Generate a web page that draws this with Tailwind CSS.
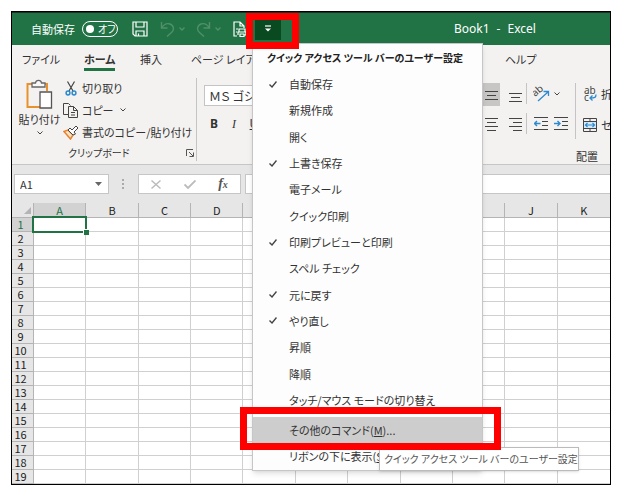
<!DOCTYPE html>
<html lang="ja">
<head>
  <meta charset="UTF-8" />
  <meta name="viewport" content="width=device-width, initial-scale=1.0" />
  <title>Book1 - Excel</title>
  <script src="https://cdn.jsdelivr.net/npm/@tailwindcss/browser@4"></script>
</head>
<body class="bg-white min-h-screen pt-[11px] pb-2 pl-[11px] pr-[15px] font-['Noto_Sans_CJK_JP',sans-serif] [font-feature-settings:'palt'] text-[11px] leading-4 text-[#333]">
  <div class="relative border border-black bg-[#f3f2f1]">

    <!-- Title bar -->
    <header class="h-[33px] flex items-center bg-[#217346] border-t border-[#1b3326] text-white pl-[19px] overflow-hidden">
      <label for="autosave" class="w-[51px] shrink-0">自動保存</label>
      <span class="relative w-9 h-4 shrink-0">
        <input type="checkbox" id="autosave" class="appearance-none block w-9 h-4 rounded-full border border-white" />
        <span class="absolute left-1 top-1 size-2 rounded-full bg-white pointer-events-none"></span>
        <span class="absolute left-4 top-0 text-[10px] pointer-events-none">オフ</span>
      </span>
      <button class="ml-[14px] shrink-0" aria-label="上書き保存">
        <svg class="size-4" viewBox="0 0 16 16" fill="none" stroke="#fff" stroke-width="1.2"><path d="M1 1h14v14H3l-2-2zM4 1v5h8V1M4 15v-5h8v5M6.5 15v-2.5"/></svg>
      </button>
      <button class="ml-3 flex items-center gap-1 shrink-0" aria-label="元に戻す">
        <svg class="w-[15px] h-4" viewBox="0 0 15 16" fill="none" stroke="#4f9068" stroke-width="1.4"><path d="M1.500 1v6h6M1.500 7C4 3 7 2 10 3c4 1.500 4.500 6 1.500 8.500L7 15.500"/></svg>
        <svg class="w-[6px] h-1" viewBox="0 0 6 4" fill="none" stroke="#4f9068" stroke-width="1.3"><path d="M.5.5 3 3 5.500.5"/></svg>
      </button>
      <button class="ml-[11px] flex items-center gap-1 shrink-0" aria-label="やり直し">
        <svg class="w-[15px] h-4" viewBox="0 0 15 16" fill="none" stroke="#4f9068" stroke-width="1.4"><path d="M13.500 1v6h-6M13.500 7C11 3 8 2 5 3 1 4.500.5 9 3.500 11.500L8 15.500"/></svg>
        <svg class="w-[6px] h-1" viewBox="0 0 6 4" fill="none" stroke="#4f9068" stroke-width="1.3"><path d="M.5.5 3 3 5.500.5"/></svg>
      </button>
      <button class="ml-3 shrink-0" aria-label="印刷プレビューと印刷">
        <svg class="w-[14px] h-4" viewBox="0 0 14 16" fill="none" stroke="#fff" stroke-width="1.2"><path d="M4 15H1V1h6l4 4v2M7 1v4h4M3 8h2M3 11h1M6 11V8h6v3M5 14v-3h8v3h-2M7 13h4v2.500H7z"/></svg>
      </button>
      <button class="ml-2 w-[26px] h-[22px] shrink-0 bg-[#0a4a20] grid place-items-center" aria-label="クイック アクセス ツール バーのユーザー設定">
        <svg class="w-2 h-2" viewBox="0 0 8 8"><path d="M1 1h6" stroke="#fff" stroke-width="1.2"/><path d="M1 3.500h6L4 6.500z" fill="#fff"/></svg>
      </button>
      <h1 class="ml-[173px] shrink-0 text-[12px] font-['Noto_Sans',sans-serif]"><span>Book1</span><span class="mx-[7px]">-</span><span>Excel</span></h1>
    </header>

    <!-- Ribbon tabs -->
    <nav class="h-[30px] flex items-start pt-[6px] pl-[10px] whitespace-nowrap overflow-hidden">
      <a href="#" class="w-[62px] shrink-0">ファイル</a>
      <span class="w-14 shrink-0"><a href="#" class="inline-block h-5 border-b-[3px] border-[#217346] font-bold">ホーム</a></span>
      <a href="#" class="w-[51px] shrink-0">挿入</a>
      <a href="#" class="w-[314px] shrink-0">ページ レイアウト</a>
      <a href="#">ヘルプ</a>
    </nav>

    <!-- Ribbon -->
    <section class="h-[90px] flex border-b border-[#c6c6c6] overflow-hidden whitespace-nowrap">
      <div class="w-[185px] shrink-0 my-[3px] border-r border-[#c4c4c4] flex flex-col">
        <div class="flex grow">
          <button class="w-[51px] shrink-0 pl-1 flex flex-col items-center">
            <svg class="w-[27px] h-[30px] mt-px" viewBox="0 0 27 30" fill="none" stroke-width="1.3"><path d="M7 5H1.500v23H14M17 5h4v7" stroke="#e8912d" stroke-width="2"/><path d="M6 8V4h3.500C10 .5 15 .5 15.500 4H19v4z" fill="#f8f8f8" stroke="#666"/><path d="M14 13h11.500v16H14z" fill="#fff" stroke="#555"/></svg>
            <span class="mt-[2px]">貼り付け</span>
            <svg class="w-[6px] h-1 mt-1" viewBox="0 0 6 4" fill="none" stroke="#444"><path d="M.5.5 3 3 5.500.5"/></svg>
          </button>
          <div class="flex flex-col gap-[6px] items-start pt-[2px]">
            <button class="flex items-center">
              <svg class="w-4 h-[15px] mr-[3px]" viewBox="0 0 16 15" fill="none" stroke="#444" stroke-width="1.2"><path d="M4.500.5 10 10M11.500.5 6 10"/><circle cx="5" cy="12" r="1.900" stroke="#2b8ad0" stroke-width="1.500"/><circle cx="11" cy="12" r="1.900" stroke="#2b8ad0" stroke-width="1.500"/></svg>
              切り取り
            </button>
            <button class="flex items-center">
              <svg class="w-4 h-[15px] mr-[3px]" viewBox="0 0 16 15" fill="none" stroke="#444"><path d="M5 11.500H.5V.5h5l2 2M5.500 3.500h5l4 4v7h-9zM10.500 3.500v4h4M8 9.500h4M8 12h4"/></svg>
              コピー
              <svg class="w-[6px] h-1 ml-[6px]" viewBox="0 0 6 4" fill="none" stroke="#444"><path d="M.5.5 3 3 5.500.5"/></svg>
            </button>
            <button class="flex items-center">
              <svg class="w-4 h-[15px] mr-[3px]" viewBox="0 0 16 15" fill="none"><path d="M1 6.500 5 5l5 5-2.500 4z" fill="#fde3c4" stroke="#e8822d" stroke-width="1.500"/><path d="M5 5l2-2 2 2 4-4 2 2-4 4 1.500 2L10 10z" fill="#fff" stroke="#444"/></svg>
              書式のコピー/貼り付け
            </button>
          </div>
        </div>
        <div class="h-4 flex items-center justify-between pl-14 pr-[2px] text-[10px]">
          クリップボード
          <svg class="size-2" viewBox="0 0 8 8" fill="none" stroke="#555"><path d="M.5 7V.5H7M3 3l4 4M7.500 3.500v4h-4"/></svg>
        </div>
      </div>

      <div class="w-[286px] shrink-0 pt-[10px] pl-[7px]">
        <select aria-label="フォント" class="appearance-none block w-32 h-[21px] pl-1 border border-[#c4c4c4] bg-white text-[12px]"><option>ＭＳ ゴシック</option></select>
        <div class="flex mt-[10px] text-[12px] font-['Noto_Sans',sans-serif]">
          <button class="w-5 font-bold" aria-label="太字">B</button>
          <button class="w-5 italic font-['Liberation_Serif',serif]" aria-label="斜体">I</button>
          <button class="w-5 underline" aria-label="下線">U</button>
        </div>
      </div>

      <div class="flex grow flex-col min-w-0 pt-2">
        <div class="flex h-14 shrink-0">
          <div class="w-[43px] shrink-0 grid grid-cols-2 content-start gap-y-[9px]">
            <button class="bg-[#c8c6c4] h-[23px] w-[17px] grid place-items-center" aria-label="上下中央揃え"><svg class="w-[13px] h-[14px]" viewBox="0 0 13 14" stroke="#444"><path d="M0 3.500h13M2 7.500h9M0 11.500h13"/></svg></button>
            <button class="h-[23px] pt-[3px] grid place-items-center" aria-label="下揃え"><svg class="w-[13px] h-[14px]" viewBox="0 0 13 14" stroke="#444"><path d="M0 4.500h13M2 8.500h9M0 12.500h13"/></svg></button>
            <button class="h-[18px] w-[17px] grid place-items-center" aria-label="中央揃え"><svg class="w-[13px] h-[14px]" viewBox="0 0 13 14" stroke="#444"><path d="M0 1.500h13M2 5.500h9M0 9.500h13M2 13.500h9"/></svg></button>
            <button class="h-[18px] grid place-items-center" aria-label="右揃え"><svg class="w-[13px] h-[14px]" viewBox="0 0 13 14" stroke="#444"><path d="M0 1.500h13M4 5.500h9M0 9.500h13M4 13.500h9"/></svg></button>
          </div>
          <div class="w-[50px] shrink-0 flex flex-col gap-[9px] border-r border-[#c4c4c4]">
            <button class="h-[21px] pl-[6px] border-l border-[#c4c4c4] flex items-center gap-1" aria-label="方向">
              <svg class="w-[17px] h-4" viewBox="0 0 17 16" fill="none"><text x="2" y="11" transform="rotate(-40 2 11)" font-family="Noto Sans" font-size="10" fill="#444">ab</text><path d="M5 15 15 6M10.500 5.500H15.500V10" stroke="#2b8ad0" stroke-width="1.300"/></svg>
              <svg class="w-[6px] h-1" viewBox="0 0 6 4" fill="none" stroke="#444"><path d="M.5.5 3 3 5.500.5"/></svg>
            </button>
            <div class="h-[21px] pl-[7px] border-l border-[#c4c4c4] flex items-center gap-[6px]">
              <button aria-label="インデントを減らす"><svg class="w-[14px] h-[13px]" viewBox="0 0 14 13" fill="none" stroke="#444"><path d="M0 .5h14M8 4.500h6M8 8.500h6M0 12.500h14"/><path d="M6.500 6.500h-6M3 4 .5 6.500 3 9" stroke="#2b8ad0" stroke-width="1.400"/></svg></button>
              <button aria-label="インデントを増やす"><svg class="w-[14px] h-[13px]" viewBox="0 0 14 13" fill="none" stroke="#444"><path d="M0 .5h14M8 4.500h6M8 8.500h6M0 12.500h14"/><path d="M0 6.500h6M3.500 4 6 6.500 3.500 9" stroke="#2b8ad0" stroke-width="1.400"/></svg></button>
            </div>
          </div>
          <div class="flex flex-col gap-[15px] pl-[7px] pt-[3px]">
            <button class="flex items-center gap-1">
              <svg class="w-[14px] h-4" viewBox="0 0 14 16" fill="none"><text x="1" y="8" font-family="Noto Sans" font-size="10" fill="#444">ab</text><text x="1" y="15" font-family="Noto Sans" font-size="10" fill="#444">c</text><path d="M13 8.500c0 3-1 3.500-6 3.500M9.500 9.500 7 12l2.500 2.500" stroke="#2b8ad0" stroke-width="1.300"/></svg>
              折り返して全体を表示する
            </button>
            <button class="flex items-center gap-1">
              <svg class="w-[14px] h-[14px]" viewBox="0 0 14 14" fill="none"><path d="M.5.5h13v13H.5zM.5 3.500h13M.5 10.500h13M7 .5v3M7 10.500v3" stroke="#444"/><path d="M1 4h12v6H1z" fill="#d4eafa"/><path d="M2.500 7h9M4.500 5l-2 2 2 2M9.500 5l2 2-2 2" stroke="#2b8ad0" stroke-width="1.200"/></svg>
              セルを結合して中央揃え
            </button>
          </div>
        </div>
        <div class="pl-[93px] mt-[9px]">配置</div>
      </div>
    </section>

    <!-- Formula bar -->
    <div class="h-[38px] flex items-center bg-[#e6e6e6] pl-[2px]">
      <label class="w-[95px] h-5 shrink-0 flex items-center bg-white border border-[#c6c6c6]">
        <input aria-label="名前ボックス" value="A1" class="w-20 pl-[5px] outline-none" />
        <svg class="w-[7px] h-1" viewBox="0 0 7 4" fill="#666"><path d="M0 0h7L3.500 4z"/></svg>
      </label>
      <svg class="w-[3px] h-[11px] mx-[13px] shrink-0" viewBox="0 0 3 11" fill="#aaa"><path d="M0 0h2v2H0zM0 4h2v2H0zM0 8h2v2H0z"/></svg>
      <div class="w-[103px] h-5 shrink-0 flex items-center bg-white border border-[#c6c6c6]">
        <button class="w-[34px] grid place-items-center" aria-label="キャンセル"><svg class="w-[10px] h-[9px]" viewBox="0 0 10 9" stroke="#bbb" stroke-width="1.400"><path d="M.5.5l9 8M9.500.5l-9 8"/></svg></button>
        <button class="w-[33px] grid place-items-center" aria-label="入力"><svg class="w-3 h-[9px]" viewBox="0 0 12 9" fill="none" stroke="#bbb" stroke-width="1.800"><path d="M.5 4.500 4 8l7.500-7.500"/></svg></button>
        <button class="w-[34px] font-['Liberation_Serif',serif] italic font-bold text-[14px] text-[#555]" aria-label="関数の挿入">f<span class="text-[10px]">x</span></button>
      </div>
      <input aria-label="数式バー" class="ml-1 h-5 grow min-w-0 bg-white border border-r-0 border-[#c6c6c6]" />
    </div>

    <!-- Sheet -->
    <table class="w-full table-fixed border-separate border-spacing-0 bg-white font-['Liberation_Sans_Narrow','Noto_Sans_CJK_JP',sans-serif] leading-[13px] text-[#222]">
      <thead>
        <tr id="columns" class="h-[15px] bg-[#e6e6e6]">
          <th class="w-[22px] border-r border-b border-[#b4b4b4]"><svg class="size-[7px] ml-3" viewBox="0 0 7 7" fill="#b4b4b4"><path d="M7 0v7H0z"/></svg></th>
        </tr>
      </thead>
      <tbody id="rows"></tbody>
    </table>

    <!-- Quick access menu -->
    <div class="absolute left-60 top-[31px] w-[231px] h-[428px] bg-[#fdfdfd] border border-[#c6c6c6] shadow-md whitespace-nowrap">
      <h2 class="h-[27px] pt-[6px] pl-[14px] text-[10px] font-bold text-[#222]">クイック アクセス ツール バーのユーザー設定</h2>
      <ul id="menu" class="h-[342px] flex flex-col"></ul>
      <button class="mt-1 h-[26px] w-full pl-9 text-left bg-[#cdcdcd]">その他のコマンド(<u>M</u>)...</button>
      <button class="block h-[26px] pl-9 text-left">リボンの下に表示(<u>S</u>)</button>
    </div>

    <!-- Tooltip -->
    <div role="tooltip" class="absolute left-[367px] top-[435px] h-6 w-[200px] px-1 flex items-center bg-white border border-[#bbb] shadow-sm text-[10px] text-[#555] whitespace-nowrap">クイック アクセス ツール バーのユーザー設定</div>

    <!-- Highlights -->
    <div class="absolute left-[234px] top-[1px] w-[53px] h-[36px] border-[7px] border-[#fe0000] pointer-events-none"></div>
    <div class="absolute left-[228px] top-[395px] w-[261px] h-[43px] border-[7px] border-[#fe0000] pointer-events-none"></div>
  </div>

  <script>
    const columns = document.getElementById('columns');
    const rows = document.getElementById('rows');
    const menu = document.getElementById('menu');
    const letters = 'ABCDEFGHIJK'.split('');

    letters.forEach((l, i) => {
      const state = i === 0 ? 'bg-[#d2d2d2] text-[#217346]' : '';
      columns.innerHTML += `<th class="border-r border-b border-[#b4b4b4] last:border-r-0 font-normal ${state}">${l}</th>`;
    });

    let html = '';
    for (let n = 1; n <= 19; n++) {
      const state = n === 1 ? 'bg-[#d2d2d2] text-[#217346]' : 'bg-[#e6e6e6]';
      html += `<tr class="h-[14px]"><th class="border-r border-b border-[#b4b4b4] pr-1 font-normal ${state}">${n}</th>`;
      letters.forEach((l, i) => {
        const cursor = n === 1 && i === 0
          ? '<div class="absolute -inset-x-[2px] -top-[2px] -bottom-[2px] border-2 border-[#217346]"></div><div class="absolute -right-[4px] -bottom-[4px] size-[6px] bg-[#217346] border-t border-l border-white z-10"></div>'
          : '';
        html += `<td class="relative border-r border-b border-[#d0d0d0] last:border-r-0 ${cursor ? 'z-10' : ''}">${cursor}</td>`;
      });
      html += '</tr>';
    }
    rows.innerHTML = html;

    const items = [
      ['自動保存', true],
      ['新規作成', false],
      ['開く', false],
      ['上書き保存', true],
      ['電子メール', false],
      ['クイック印刷', false],
      ['印刷プレビューと印刷', true],
      ['スペル チェック', false],
      ['元に戻す', true],
      ['やり直し', true],
      ['昇順', false],
      ['降順', false],
      ['タッチ/マウス モードの切り替え', false]
    ];
    menu.innerHTML = items.map(([label, checked]) => `
      <li class="flex-1 flex">
        <button class="w-full flex items-center text-left">
          <span class="w-9 pl-4">${checked ? '<svg class="w-2 h-[7px]" viewBox="0 0 8 7" fill="none" stroke="#444" stroke-width="1.400"><path d="M.5 3.500 3 6l4.500-5.500"/></svg>' : ''}</span>${label}
        </button>
      </li>`).join('');
  </script>
</body>
</html>
